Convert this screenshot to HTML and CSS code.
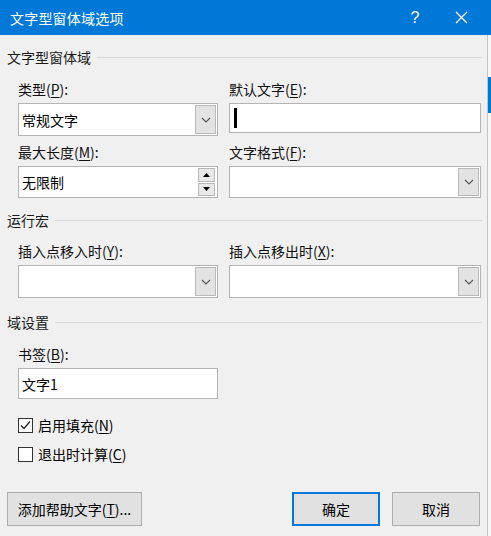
FILE: index.html
```html
<!DOCTYPE html>
<html lang="zh-CN">
<head>
<meta charset="utf-8">
<title>文字型窗体域选项</title>
<link rel="stylesheet" href="styles.css">
</head>
<body>
<div class="titlebar">
  <span class="title">文字型窗体域选项</span>
  <span class="tb-btn help">?</span>
  <span class="tb-btn close">
    <svg width="13" height="13" viewBox="0 0 13 13"><path d="M1 1 L12 12 M12 1 L1 12" stroke="#fff" stroke-width="1.3" fill="none"/></svg>
  </span>
</div>
<div class="frame">
  <div class="dialog">
    <div class="section-head first">文字型窗体域</div>
    <div class="grid">
      <div class="field r1">
        <div class="label">类型(<u>P</u>):</div>
        <div class="combo tall">
          <span class="value">常规文字</span>
          <span class="drop"><svg width="10" height="6" viewBox="0 0 10 6"><path d="M1 1 L5 5 L9 1" stroke="#555" stroke-width="1.1" fill="none"/></svg></span>
        </div>
      </div>
      <div class="field r1">
        <div class="label">默认文字(<u>E</u>):</div>
        <div class="textbox short"><span class="caret"></span></div>
      </div>
      <div class="field r2">
        <div class="label">最大长度(<u>M</u>):</div>
        <div class="combo">
          <span class="value">无限制</span>
          <span class="spin">
            <span class="spin-btn"><svg width="7" height="4" viewBox="0 0 7 4"><path d="M0 4 L3.5 0 L7 4 Z" fill="#000"/></svg></span>
            <span class="spin-btn"><svg width="7" height="4" viewBox="0 0 7 4"><path d="M0 0 L3.5 4 L7 0 Z" fill="#000"/></svg></span>
          </span>
        </div>
      </div>
      <div class="field r2">
        <div class="label">文字格式(<u>F</u>):</div>
        <div class="combo">
          <span class="value"></span>
          <span class="drop"><svg width="10" height="6" viewBox="0 0 10 6"><path d="M1 1 L5 5 L9 1" stroke="#555" stroke-width="1.1" fill="none"/></svg></span>
        </div>
      </div>
    </div>

    <div class="section-head h2">运行宏</div>
    <div class="grid">
      <div class="field r3">
        <div class="label">插入点移入时(<u>Y</u>):</div>
        <div class="combo tall">
          <span class="value"></span>
          <span class="drop"><svg width="10" height="6" viewBox="0 0 10 6"><path d="M1 1 L5 5 L9 1" stroke="#555" stroke-width="1.1" fill="none"/></svg></span>
        </div>
      </div>
      <div class="field r3">
        <div class="label">插入点移出时(<u>X</u>):</div>
        <div class="combo tall">
          <span class="value"></span>
          <span class="drop"><svg width="10" height="6" viewBox="0 0 10 6"><path d="M1 1 L5 5 L9 1" stroke="#555" stroke-width="1.1" fill="none"/></svg></span>
        </div>
      </div>
    </div>

    <div class="section-head h3">域设置</div>
    <div class="field bookmark">
      <div class="label">书签(<u>B</u>):</div>
      <div class="textbox bm"><span class="value">文字1</span></div>
    </div>

    <div class="check c1">
      <span class="box"><svg width="13" height="13" viewBox="0 0 13 13"><path d="M2 6.5 L5 9.5 L11 2.5" stroke="#222" stroke-width="1.2" fill="none"/></svg></span>
      <span>启用填充(<u>N</u>)</span>
    </div>
    <div class="check c2">
      <span class="box"></span>
      <span>退出时计算(<u>C</u>)</span>
    </div>

    <div class="buttons">
      <div class="btn help-text">添加帮助文字(<u>T</u>)...</div>
      <div class="btn ok">确定</div>
      <div class="btn cancel">取消</div>
    </div>
  </div>
  <div class="edge"><div class="edge-mark"></div></div>
</div>
</body>
</html>
```
FILE: styles.css
```css
html, body {
  margin: 0;
  padding: 0;
}
body {
  width: 491px;
  height: 536px;
  overflow: hidden;
  background: #f0f0f0;
  font-family: "Noto Sans CJK SC", "Microsoft YaHei", sans-serif;
  font-size: 14px;
  line-height: 20px;
  color: #000;
}
u {
  text-decoration: underline;
  text-underline-offset: 2px;
}
.titlebar {
  height: 35px;
  background: #0078d7;
  color: #fff;
  display: flex;
  align-items: center;
}
.title {
  padding-left: 10px;
  font-size: 14px;
  letter-spacing: 0.2px;
}
.tb-btn {
  display: flex;
  align-items: center;
  justify-content: center;
  height: 35px;
}
.help {
  margin-left: auto;
  width: 30px;
  font-size: 16px;
  font-family: "Liberation Sans", sans-serif;
}
.close {
  width: 46px;
  margin-left: 8px;
  margin-right: 7px;
}
.frame {
  display: flex;
  height: 501px;
}
.dialog {
  width: 487px;
  border-right: 1px solid #c4c4c4;
  background: #f0f0f0;
}
.edge {
  flex: 1;
  background: #f7f7f7;
}
.edge-mark {
  margin-top: 42px;
  height: 36px;
  background: #0078d7;
}
.section-head {
  display: flex;
  align-items: center;
  height: 20px;
  margin-left: 7px;
  width: 475px;
  color: #1a1a1a;
}
.section-head::after {
  content: "";
  flex: 1;
  height: 1px;
  background: #dadada;
  margin-left: 6px;
}
.section-head.first { margin-top: 12px; }
.section-head.h2 { margin-top: 12px; }
.section-head.h3 { margin-top: 14px; }
.grid {
  display: grid;
  grid-template-columns: 200px 252px;
  column-gap: 11px;
  margin-left: 18px;
}
.label {
  height: 20px;
  margin-bottom: 4px;
  color: #111;
}
.field.r1 { margin-top: 12px; }
.field.r2 { margin-top: 6px; }
.field.r3 { margin-top: 11px; }
.combo, .textbox {
  box-sizing: border-box;
  height: 32px;
  background: #fff;
  border: 1px solid #b4b4b4;
  display: flex;
  align-items: center;
}
.combo.tall { height: 33px; }
.textbox.short { height: 30px; }
.value {
  flex: 1;
  padding-left: 3px;
}
.drop {
  align-self: stretch;
  width: 19px;
  margin: 1px;
  background: #e3e3e3;
  border: 1px solid #b9b9b9;
  display: flex;
  align-items: center;
  justify-content: center;
}
.spin {
  align-self: stretch;
  width: 17px;
  margin: 1px 2px 1px 0;
  display: flex;
  flex-direction: column;
  gap: 1px;
}
.spin-btn {
  flex: 1;
  background: #e8e8e8;
  border: 1px solid #b9b9b9;
  display: flex;
  align-items: center;
  justify-content: center;
}
.caret {
  width: 3px;
  height: 20px;
  background: #000;
  margin-left: 4px;
}
.field.bookmark {
  margin-top: 12px;
  margin-left: 18px;
  width: 200px;
}
.textbox.bm { height: 31px; }
.check {
  display: flex;
  align-items: center;
  height: 20px;
  margin-left: 18px;
  gap: 5px;
}
.check.c1 { margin-top: 16px; }
.check.c2 { margin-top: 9px; }
.box {
  box-sizing: border-box;
  width: 15px;
  height: 15px;
  border: 1px solid #333;
  background: #fff;
  display: flex;
  align-items: center;
  justify-content: center;
}
.buttons {
  display: flex;
  margin-top: 28px;
  margin-left: 7px;
}
.btn {
  box-sizing: border-box;
  height: 34px;
  background: #e1e1e1;
  border: 1px solid #adadad;
  display: flex;
  align-items: center;
  justify-content: center;
}
.help-text {
  width: 135px;
}
.ok {
  width: 88px;
  margin-left: 150px;
  border: 2px solid #0078d7;
}
.cancel {
  width: 88px;
  margin-left: 12px;
}
```
